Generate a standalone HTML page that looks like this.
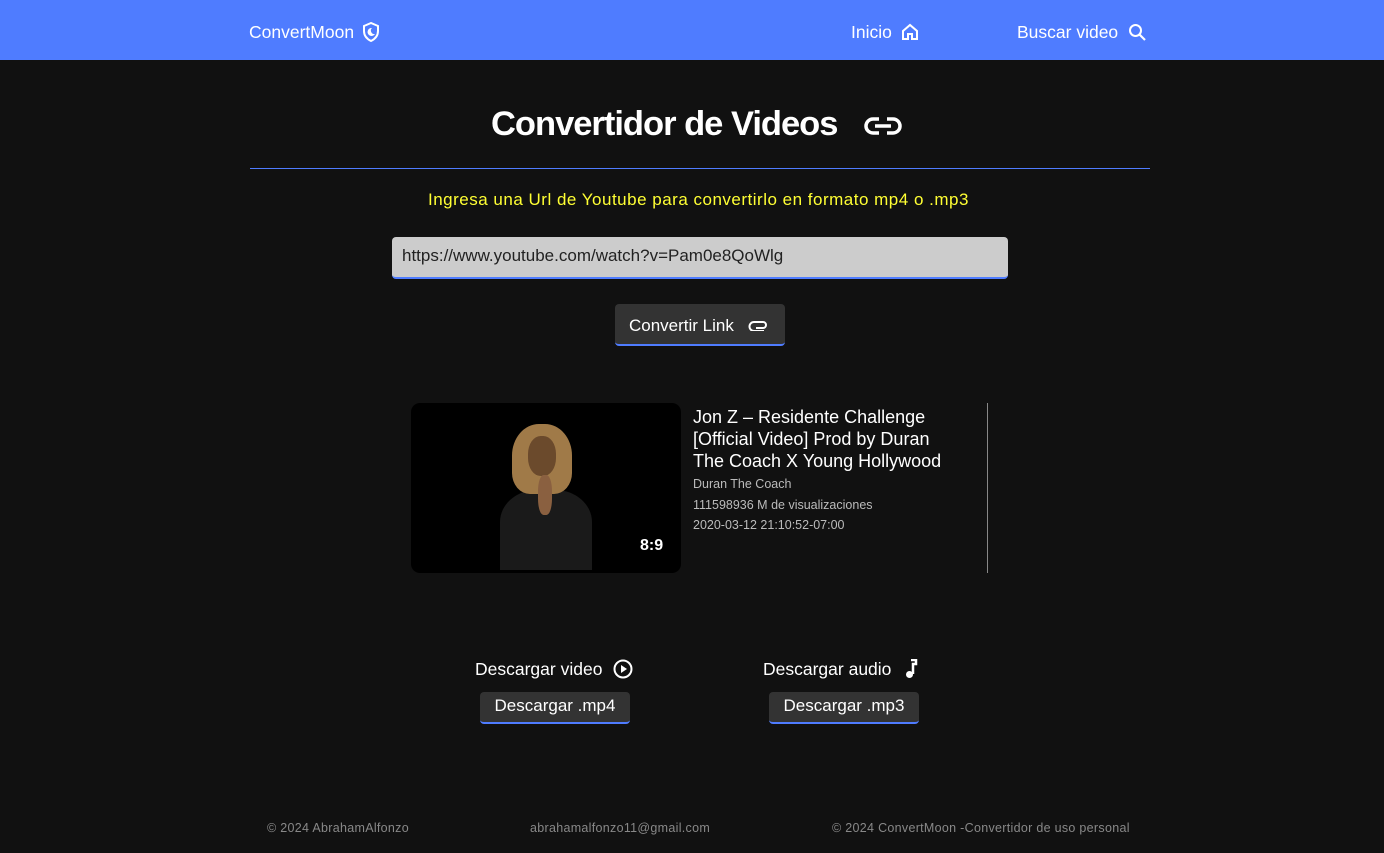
<!DOCTYPE html>
<html><head><meta charset="utf-8"><style>
*{margin:0;padding:0;box-sizing:border-box}
body{width:1384px;height:853px;background:#111;font-family:"Liberation Sans",sans-serif;color:#fff;position:relative;overflow:hidden}
.nav{position:absolute;left:0;top:0;width:1384px;height:60px;background:#4f7cff}
.abs{position:absolute;white-space:nowrap}
.btn{position:absolute;background:#333;border-bottom:2px solid #4f7cff;border-radius:4px;color:#fff;text-align:center}
</style></head><body>
<div class="nav"></div>
<div class="abs" style="left:249px;top:22px;font-size:17.5px">ConvertMoon</div>
<svg class="abs" style="left:362px;top:22px" width="18" height="20" viewBox="0 0 18 20"><path d="M9 1L2 4v5c0 5 3 8 7 10 4-2 7-5 7-10V4z" fill="none" stroke="#fff" stroke-width="2"/><path d="M10 6a4 4 0 1 0 3 6 3.5 3.5 0 0 1-3-6z" fill="#fff"/></svg>
<div class="abs" style="left:851px;top:22px;font-size:17.5px">Inicio</div>
<svg class="abs" style="left:901px;top:23px" width="18" height="18" viewBox="0 0 18 18"><path d="M2 8L9 2l7 6v8h-5v-5H7v5H2z" fill="none" stroke="#fff" stroke-width="2"/></svg>
<div class="abs" style="left:1017px;top:22px;font-size:17.5px">Buscar video</div>
<svg class="abs" style="left:1128px;top:23px" width="19" height="19" viewBox="0 0 19 19"><circle cx="7.5" cy="7.5" r="5.5" fill="none" stroke="#fff" stroke-width="2"/><path d="M11.5 11.5L17 17" stroke="#fff" stroke-width="2.2"/></svg>
<div class="abs" style="left:491px;top:105px;font-size:34.5px;font-weight:bold;letter-spacing:-1px">Convertidor de Videos</div>
<svg class="abs" style="left:863px;top:115px" width="40" height="22" viewBox="0 0 40 22"><path d="M16 4H10a7 7 0 0 0 0 14h6M24 4h6a7 7 0 0 1 0 14h-6M12 11h16" fill="none" stroke="#fff" stroke-width="3.5"/></svg>
<div class="abs" style="left:250px;top:168px;width:900px;height:1px;background:#4f7cff"></div>
<div class="abs" style="left:428px;top:190px;font-size:17px;letter-spacing:0.5px;color:#ffff33">Ingresa una Url de Youtube para convertirlo en formato mp4 o .mp3</div>
<div class="abs" style="left:392px;top:237px;width:616px;height:42px;background:#ccc;border-radius:4px;border-bottom:2px solid #4f7cff;color:#222;font-size:17px;padding:9px 10px">https://www.youtube.com/watch?v=Pam0e8QoWlg</div>
<div class="btn" style="left:615px;top:304px;width:170px;height:42px"></div>
<div class="abs" style="left:629px;top:316px;font-size:17px">Convertir Link</div>
<svg class="abs" style="left:748px;top:319px" width="21" height="12" viewBox="0 0 21 12"><path d="M8 9h7a3 3 0 0 0 0-6H6a4.5 4.5 0 0 0 0 9h10" fill="none" stroke="#fff" stroke-width="2"/></svg>
<div class="abs" style="left:411px;top:403px;width:270px;height:170px;background:#000;border-radius:9px"></div>
<div class="abs" style="left:500px;top:490px;width:92px;height:80px;background:#1a1a1a;border-radius:40% 40% 0 0"></div>
<div class="abs" style="left:512px;top:424px;width:60px;height:70px;background:#a07a48;border-radius:45% 45% 30% 30%"></div>
<div class="abs" style="left:528px;top:436px;width:28px;height:40px;background:#6b4a2c;border-radius:45%"></div>
<div class="abs" style="left:538px;top:475px;width:14px;height:40px;background:#8a6040;border-radius:40%"></div>
<div class="abs" style="left:640px;top:537px;font-size:16px;font-weight:bold">8:9</div>
<div class="abs" style="left:693px;top:406px;font-size:18px;line-height:22px">Jon Z – Residente Challenge<br>[Official Video] Prod by Duran<br>The Coach X Young Hollywood</div>
<div class="abs" style="left:693px;top:474px;font-size:12.5px;color:#bbb;line-height:20.5px">Duran The Coach<br>111598936 M de visualizaciones<br>2020-03-12 21:10:52-07:00</div>
<div class="abs" style="left:987px;top:403px;width:1px;height:170px;background:#888"></div>
<div class="abs" style="left:475px;top:659px;font-size:17.5px">Descargar video</div>
<svg class="abs" style="left:613px;top:659px" width="20" height="20" viewBox="0 0 20 20"><circle cx="10" cy="10" r="8.5" fill="none" stroke="#fff" stroke-width="2"/><path d="M8 6v8l6-4z" fill="#fff"/></svg>
<div class="abs" style="left:763px;top:659px;font-size:17.5px">Descargar audio</div>
<svg class="abs" style="left:904px;top:659px" width="14" height="20" viewBox="0 0 14 20"><path d="M7 1h5v4H9v10" fill="none" stroke="#fff" stroke-width="2.5"/><circle cx="5.5" cy="15.5" r="3.5" fill="#fff"/></svg>
<div class="btn" style="left:480px;top:692px;width:150px;height:32px;font-size:17px;padding-top:4px">Descargar .mp4</div>
<div class="btn" style="left:769px;top:692px;width:150px;height:32px;font-size:17px;padding-top:4px">Descargar .mp3</div>
<div class="abs" style="left:267px;top:821px;font-size:12.5px;letter-spacing:0.3px;color:#888">© 2024 AbrahamAlfonzo</div>
<div class="abs" style="left:530px;top:821px;font-size:12.5px;letter-spacing:0.3px;color:#888">abrahamalfonzo11@gmail.com</div>
<div class="abs" style="left:832px;top:821px;font-size:12.5px;letter-spacing:0.3px;color:#888">© 2024 ConvertMoon -Convertidor de uso personal</div>
</body></html>
